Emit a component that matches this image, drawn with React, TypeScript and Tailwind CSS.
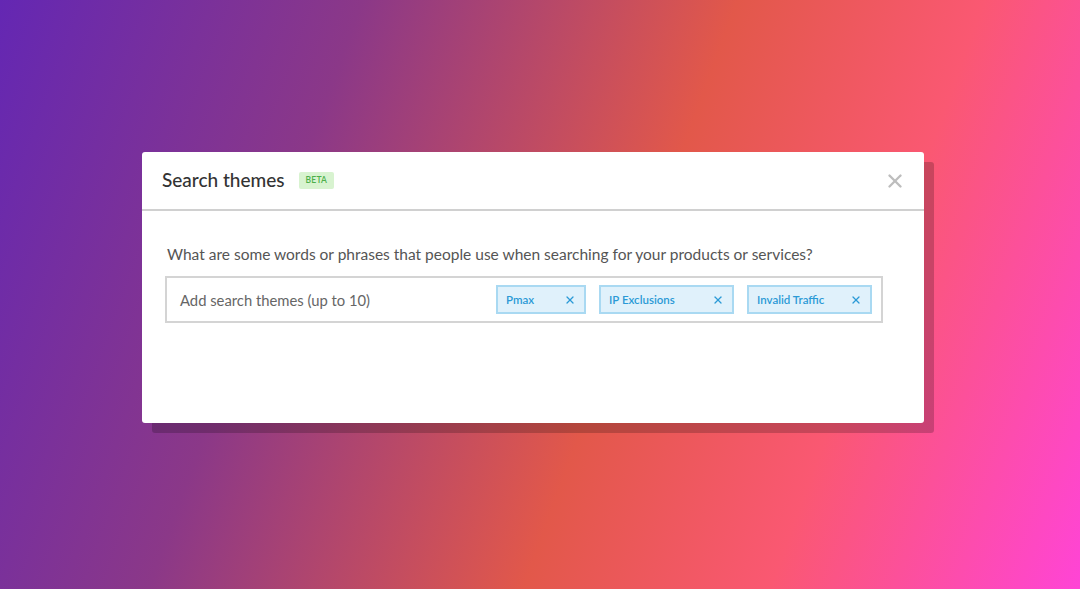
import { X } from "lucide-react";

function Tag({ label, width }: { label: string; width: string }) {
  return (
    <div className={`flex h-[29px] ${width} items-center justify-between border-2 border-[#a9d9f2] bg-[#e0f1fb] pl-[8px] pr-[8px]`}>
      <span className="text-[11.5px] font-semibold text-[#2b9ad6]">{label}</span>
      <X className="size-[12px] text-[#2b9ad6]" strokeWidth={2.6} />
    </div>
  );
}

function Header() {
  return (
    <div className="flex h-[59px] items-center justify-between border-b-2 border-[#d0d0d0] pl-[20px] pr-[18px]">
      <div className="flex items-center gap-[14px]">
        <h1 className="text-[19px] font-medium text-[#333]">Search themes</h1>
        <span className="flex h-[17px] items-center rounded-[2px] bg-[#d8f3d0] px-[7px] text-[8.5px] font-semibold tracking-wide text-[#4db04a]">BETA</span>
      </div>
      <X className="size-[22px] text-[#bdbdbd]" strokeWidth={2.6} />
    </div>
  );
}

export default function App() {
  return (
    <div className="flex h-[589px] w-[1080px] items-start justify-center bg-[linear-gradient(110deg,#6427b3_0%,#8b3888_28%,#e2584a_57%,#fa5872_76%,#ff44d6_100%)] pt-[152px] font-['Lato',sans-serif]">
      <div className="relative ml-[-14px] w-[782px]">
        <div className="absolute left-[10px] top-[10px] h-full w-full rounded-[3px] bg-black/20" />
        <div className="relative h-[271px] rounded-[3px] bg-white">
          <Header />
          <div className="pl-[23px] pt-[32px]">
            <p className="pl-[2px] text-[15.5px] text-[#555]">What are some words or phrases that people use when searching for your products or services?</p>
            <div className="mt-[10px] flex h-[47px] w-[718px] items-center border-2 border-[#d4d4d4] pl-[13px] pr-[9px]">
              <span className="flex-1 text-[14.8px] text-[#666]">Add search themes (up to 10)</span>
              <div className="flex gap-[13px]">
                <Tag label="Pmax" width="w-[90px]" />
                <Tag label="IP Exclusions" width="w-[135px]" />
                <Tag label="Invalid Traffic" width="w-[125px]" />
              </div>
            </div>
          </div>
        </div>
      </div>
    </div>
  );
}
